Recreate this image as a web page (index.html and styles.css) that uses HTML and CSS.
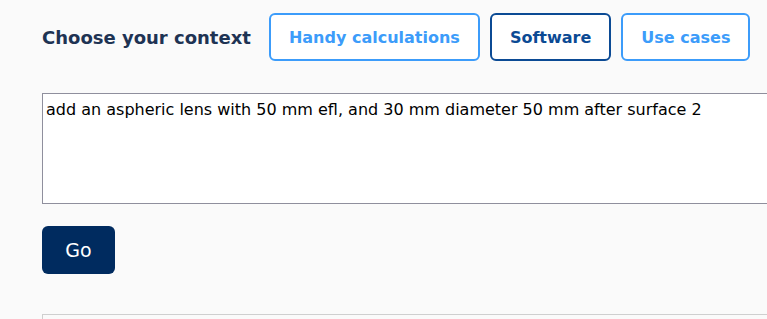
FILE: index.html
```html
<!DOCTYPE html>
<html lang="en">
<head>
    <meta charset="UTF-8">
    <meta name="viewport" content="width=device-width, initial-scale=1.0">
    <title>Ask the assistant</title>
    <link rel="stylesheet" href="styles.css">
</head>
<body>

    <main class="page">
        <!-- Context picker -->
        <div class="context-bar">
            <h2>Choose your context</h2>
            <button class="context-btn">Handy calculations</button>
            <button class="context-btn active">Software</button>
            <button class="context-btn">Use cases</button>
        </div>

        <!-- Prompt -->
        <textarea class="prompt" spellcheck="true">add an aspheric lens with 50 mm efl, and 30 mm diameter 50 mm after surface 2</textarea>

        <button class="go-btn">Go</button>

        <!-- Answer -->
        <div class="answer"></div>
    </main>

</body>
</html>
```

FILE: styles.css
```css
/* Reset */
* {
    margin: 0;
    padding: 0;
    box-sizing: border-box;
    font-family: "DejaVu Sans", Verdana, sans-serif;
}

html, body {
    overflow: hidden;
}

body {
    background-color: #fafafa;
    color: #000;
}

.page {
    padding: 13px 0 0 42px;
    display: flex;
    flex-direction: column;
    align-items: flex-start;
}

/* Context bar */
.context-bar {
    display: flex;
    align-items: center;
    gap: 10px;
}

.context-bar h2 {
    font-size: 18px;
    font-weight: bold;
    color: #1e3353;
    margin-right: 8px;
}

.context-btn {
    height: 48px;
    padding: 0 18px;
    background-color: #fff;
    border: 2px solid #3c9cfa;
    border-radius: 6px;
    color: #3c9cfa;
    font-size: 16px;
    font-weight: bold;
    cursor: pointer;
}

.context-btn.active {
    border-color: #0b4a94;
    color: #0b4a94;
}

/* Prompt */
.prompt {
    margin-top: 32px;
    width: 800px;
    height: 111px;
    padding: 6px 3px;
    border: 1px solid #8f8f9d;
    background-color: #fff;
    font-size: 16px;
    line-height: 1.25;
    color: #000;
    resize: none;
}

.go-btn {
    margin-top: 22px;
    height: 48px;
    width: 73px;
    background-color: #002b5f;
    color: #fff;
    border: none;
    border-radius: 6px;
    font-size: 19px;
    cursor: pointer;
}

.answer {
    margin-top: 40px;
    width: 800px;
    height: 60px;
    border: 1px solid #cfcfcf;
    background-color: #fafafa;
}
```
